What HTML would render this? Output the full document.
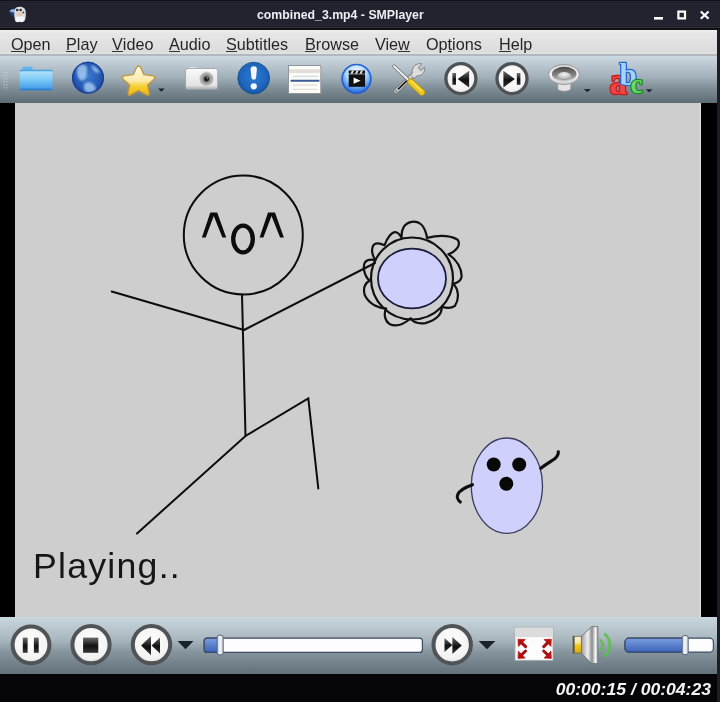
<!DOCTYPE html>
<html><head><meta charset="utf-8">
<style>
*{margin:0;padding:0;box-sizing:border-box}
html,body{width:720px;height:702px;overflow:hidden;background:#000;font-family:"Liberation Sans",sans-serif}
.abs{position:absolute}
#menu span,#title .t,#time{will-change:transform}
#title{left:0;top:0;width:720px;height:30px;background:#22232e}
#title .band{left:0;top:25px;width:720px;height:5px;background:#17181e}
#title .t{left:257px;top:6px;white-space:nowrap;color:#eceff2;font-weight:bold;font-size:12.3px;line-height:18px}
#menu{left:0;top:30px;width:717px;height:25.5px;background:linear-gradient(#eeeeee 0px,#e6e6e6 4px,#dcdcdc 22px,#e0e0e0 22px,#e0e0e0 23.5px,#b4b8bc 24px,#b4b8bc 25.5px)}
#menu span{position:absolute;top:4px;font-size:16.2px;line-height:20px;color:#262626}
#menu u{text-decoration:none;position:relative}
#menu u:after{content:"";position:absolute;left:0;right:0;bottom:1px;height:1.5px;background:#333}
#frameR{left:717px;top:30px;width:3px;height:672px;background:#1c1d26;z-index:5}
#tool{left:0;top:55.5px;width:717px;height:47.5px;background:linear-gradient(#cdd9e1,#a2b0ba 45%,#7e8c95 70%,#5e6c74)}
#video{left:15px;top:103px;width:686px;height:514px;background:#cecece}
#ctrl{left:0;top:617px;width:717px;height:57px;background:linear-gradient(#cad7df,#a8b6be 40%,#8896a0 60%,#62707a)}
#status{left:0;top:674px;width:720px;height:28px;background:#050507}
#time{left:540px;top:677px;width:171px;text-align:right;color:#f4f4f4;font-weight:bold;font-style:italic;font-size:16.5px;line-height:22px;transform:scaleX(1.065);transform-origin:100% 0}
</style></head><body>
<div id="title" class="abs">
  <div class="abs" style="left:0;top:0;width:720px;height:1px;background:#10131a"></div>
  <div class="abs" style="left:0;top:25px;width:720px;height:1px;background:#2b2c37"></div>
  <div class="abs" style="left:0;top:26px;width:720px;height:1px;background:#1a1b22"></div>
  <div class="abs" style="left:0;top:27px;width:720px;height:1px;background:#30313a"></div>
  <div class="abs" style="left:0;top:28px;width:720px;height:2px;background:#0f1013"></div>
  <div class="t abs">combined_3.mp4 - SMPlayer</div>
  <svg class="abs" style="left:0;top:0" width="720" height="30" viewBox="0 0 720 30">
    <defs><filter id="fIco" x="-30%" y="-30%" width="160%" height="160%"><feGaussianBlur stdDeviation="0.45"/></filter></defs>
    <g filter="url(#fIco)">
    <path d="M8.8,11.5 C10,8.5 13,8 15.5,8.8 L16,16.5 C13,17 10,15 8.8,11.5Z" fill="#1e3e72"/>
    <path d="M9.5,11 C11,9 13,8.8 15.5,9.5 L15.5,12.5 C13,12.5 11,12.2 9.5,11Z" fill="#9ab4d8"/>
    <path d="M15,9 C16,6.5 22,6 24.5,8.5 C26.5,11 26,17 25,20 C24,22.5 21,22.8 19.5,21.5 C18,22.8 15.5,22.5 15,20 C14,17 14,12 15,9Z" fill="#dcdee4"/>
    <path d="M16,17 C18,16 22,16 24.5,17 C24.5,19 24,21.5 21.5,22 C20.5,22 20,21.5 19.5,21.5 C18.5,22.3 16,22.3 15.5,20Z" fill="#f4f6fa"/>
    <circle cx="17.2" cy="10" r="1.3" fill="#2a2a2a"/><circle cx="20.6" cy="10" r="1.3" fill="#2a2a2a"/><circle cx="23.3" cy="12.6" r="1" fill="#444"/>
    <path d="M16,12.8 C18,11.8 21,11.8 23,13.2 L22.2,16 C20,16.6 18,16.6 16.5,16Z" fill="#e2ccb8"/>
    </g>
    <g fill="#ffffff">
      <rect x="654" y="17" width="9" height="2.6"/>
      <path d="M677.3,10.6 h8.8 v8.8 h-8.8z M679.5,12.8 v4.4 h4.4 v-4.4z" fill-rule="evenodd"/>
    </g>
    <g stroke="#ffffff" stroke-width="2.1" stroke-linecap="butt">
      <line x1="700.8" y1="11.4" x2="708.6" y2="18.8"/><line x1="708.6" y1="11.4" x2="700.8" y2="18.8"/>
    </g>
  </svg>
</div>
<div id="menu" class="abs">
  <span style="left:11px"><u>O</u>pen</span>
  <span style="left:66px"><u>P</u>lay</span>
  <span style="left:112px"><u>V</u>ideo</span>
  <span style="left:169px"><u>A</u>udio</span>
  <span style="left:226px"><u>S</u>ubtitles</span>
  <span style="left:305px"><u>B</u>rowse</span>
  <span style="left:375px">Vie<u>w</u></span>
  <span style="left:426px">Op<u>t</u>ions</span>
  <span style="left:499px"><u>H</u>elp</span>
</div>
<div id="frameR" class="abs"></div>
<div id="tool" class="abs"></div>
<svg class="abs" style="left:0;top:0" width="720" height="702" viewBox="0 0 720 702">
<defs>
<filter id="fBlur" x="-50%" y="-50%" width="200%" height="200%"><feGaussianBlur stdDeviation="0.9"/></filter>
<linearGradient id="gFold" x1="0" y1="0" x2="0" y2="1"><stop offset="0" stop-color="#b4e2fa"/><stop offset="0.45" stop-color="#7acaf6"/><stop offset="1" stop-color="#3a96e6"/></linearGradient>
<radialGradient id="gGlobe" cx="0.5" cy="0.45" r="0.6"><stop offset="0" stop-color="#3a7ad0"/><stop offset="0.7" stop-color="#2456b0"/><stop offset="1" stop-color="#173a90"/></radialGradient>
<linearGradient id="gStar" x1="0" y1="0" x2="0" y2="1"><stop offset="0" stop-color="#fffdf0"/><stop offset="0.5" stop-color="#fbeaa8"/><stop offset="0.7" stop-color="#f4d030"/><stop offset="1" stop-color="#e8b818"/></linearGradient>
<linearGradient id="gCam" x1="0" y1="0" x2="0" y2="1"><stop offset="0" stop-color="#fafafa"/><stop offset="0.8" stop-color="#e4e4e4"/><stop offset="1" stop-color="#a8a8a8"/></linearGradient>
<radialGradient id="gLens" cx="0.5" cy="0.5" r="0.5"><stop offset="0.45" stop-color="#505050"/><stop offset="0.6" stop-color="#8a8a8a"/><stop offset="1" stop-color="#b8b8b8"/></radialGradient>
<radialGradient id="gExc" cx="0.5" cy="0.45" r="0.55"><stop offset="0" stop-color="#2c7ad4"/><stop offset="0.75" stop-color="#1e66bc"/><stop offset="1" stop-color="#1552a0"/></radialGradient>
<radialGradient id="gClap" cx="0.5" cy="0.3" r="0.75"><stop offset="0" stop-color="#f8fcff"/><stop offset="0.45" stop-color="#b0d8ff"/><stop offset="0.75" stop-color="#4a8ae8"/><stop offset="1" stop-color="#1e54c0"/></radialGradient>
<radialGradient id="gBtn" cx="0.5" cy="0.4" r="0.6"><stop offset="0" stop-color="#ffffff"/><stop offset="0.8" stop-color="#f2f2f2"/><stop offset="1" stop-color="#d8d8d8"/></radialGradient>
<linearGradient id="gIco" x1="0" y1="0" x2="0" y2="1"><stop offset="0" stop-color="#707070"/><stop offset="0.55" stop-color="#101010"/><stop offset="1" stop-color="#303030"/></linearGradient>
<linearGradient id="gSpkRim" x1="0" y1="0" x2="0" y2="1"><stop offset="0" stop-color="#d8d8d8"/><stop offset="0.5" stop-color="#f4f4f4"/><stop offset="1" stop-color="#d0d0d0"/></linearGradient>
<linearGradient id="gSpkIn" x1="0" y1="0" x2="0" y2="1"><stop offset="0" stop-color="#4a4a4a"/><stop offset="0.6" stop-color="#8a8a8a"/><stop offset="1" stop-color="#c8c8c8"/></linearGradient>
<radialGradient id="gSpkC" cx="0.5" cy="0.3" r="0.7"><stop offset="0" stop-color="#f4f4f4"/><stop offset="0.7" stop-color="#c0c0c0"/><stop offset="1" stop-color="#8a8a8a"/></radialGradient>
</defs>
<!-- handle -->
<g fill="#d4dce2" opacity="0.45"><rect x="3.5" y="72" width="1.5" height="1.5"/><rect x="6" y="72" width="1.5" height="1.5"/><rect x="3.5" y="75" width="1.5" height="1.5"/><rect x="6" y="75" width="1.5" height="1.5"/><rect x="3.5" y="78" width="1.5" height="1.5"/><rect x="6" y="78" width="1.5" height="1.5"/><rect x="3.5" y="81" width="1.5" height="1.5"/><rect x="6" y="81" width="1.5" height="1.5"/><rect x="3.5" y="84" width="1.5" height="1.5"/><rect x="6" y="84" width="1.5" height="1.5"/><rect x="3.5" y="87" width="1.5" height="1.5"/><rect x="6" y="87" width="1.5" height="1.5"/></g>
<!-- folder -->
<rect x="22.5" y="66.8" width="10" height="5" rx="1.2" fill="#5cb6ec"/>
<rect x="19.8" y="69.8" width="32.6" height="2.5" rx="0.8" fill="#4aa4e0"/>
<rect x="19.6" y="71.2" width="32.9" height="19" rx="1.5" fill="url(#gFold)"/>
<rect x="19.6" y="88.6" width="32.9" height="1.6" fill="#2f80cc"/>
<!-- globe -->
<circle cx="88" cy="77.7" r="16" fill="url(#gGlobe)"/>
<g fill="#b4d6f8" opacity="0.75" filter="url(#fBlur)">
<path d="M79,66 C83,63.5 88,65 87,70 C86,74 88,77 84,80 C80,82 78,78 77,74 C76.5,70 77,67 79,66Z"/>
<path d="M85,83 C90,81 95,84 96,89 C93,93 87,93.5 84.5,90.5 C83.5,88 83.5,85 85,83Z"/>
<path d="M91,65.5 C95,66 99,69 99.5,73 C96,73.5 93,71 91,65.5Z"/>
</g>
<circle cx="88" cy="77.7" r="15.5" fill="none" stroke="#183a90" stroke-width="1"/>
<!-- star -->
<path d="M138.5,66 C139.5,66 140.5,67 141.3,68.8 L143.8,74.6 L151.8,75.6 C155.5,76.2 155.5,78 153.5,79.8 L147.6,85 L149.2,92.4 C149.8,95.2 148.3,96 145.8,94.6 L138.6,90.6 L131.4,94.6 C128.9,96 127.4,95.2 128,92.4 L129.6,85 L123.7,79.8 C121.7,78 121.7,76.2 125.4,75.6 L133.4,74.6 L135.9,68.8 C136.7,67 137.5,66 138.5,66Z" fill="url(#gStar)" stroke="#c0963a" stroke-width="1.3" stroke-linejoin="round"/>
<path d="M158,88.6 L164.8,88.6 L161.4,91.8Z" fill="#1a2530"/>
<!-- camera -->
<rect x="189" y="67.3" width="8" height="3" rx="1" fill="#e8e8e8"/>
<rect x="185.6" y="68.5" width="32.1" height="21" rx="2.2" fill="url(#gCam)" stroke="#9aa0a4" stroke-width="0.8"/>
<circle cx="206.5" cy="78.9" r="7" fill="#b0b0b0" stroke="#d8d8d8" stroke-width="0.8"/>
<circle cx="206.5" cy="78.9" r="4.4" fill="#8a8a8a"/>
<circle cx="206.5" cy="78.9" r="2.5" fill="#1e1e1e"/>
<circle cx="207.3" cy="78.1" r="0.8" fill="#999"/>
<!-- exclamation -->
<circle cx="253.7" cy="78.1" r="15.9" fill="url(#gExc)" stroke="#17508f" stroke-width="0.8"/>
<path d="M250.6,69.5 A3.15,3.15 0 0 1 256.9,69.5 L256,78 A2.3,2.3 0 0 1 251.5,78Z" fill="#f6f8fc"/>
<circle cx="253.75" cy="86.3" r="3.1" fill="#f6f8fc"/>
<!-- doc -->
<rect x="288.5" y="65.5" width="32.3" height="28" fill="#fbfbf8" stroke="#90949a" stroke-width="1"/>
<rect x="289" y="69.2" width="31.3" height="3.8" fill="#e4dedb"/>
<rect x="293" y="75.8" width="25" height="0.9" fill="#c8ccd8"/>
<rect x="290.4" y="79.7" width="29.2" height="2" rx="1" fill="#3c5a98"/>
<rect x="293" y="84.6" width="24" height="0.9" fill="#d8d4cc"/>
<rect x="293" y="88.8" width="24" height="0.9" fill="#d8d4cc"/>
<!-- clapper -->
<circle cx="356.5" cy="78.8" r="15" fill="url(#gClap)"/>
<circle cx="356.5" cy="78.8" r="14.3" fill="none" stroke="#2460d0" stroke-width="1.6"/>
<rect x="348.7" y="74.3" width="16.4" height="12.5" fill="#111"/>
<path d="M348.7,70.5 L365,70.5 L365,73.7 L348.7,73.7Z" fill="#111"/>
<g fill="#e8e8e8"><path d="M352,70.5 L354,70.5 L352.5,73.7 L350.5,73.7Z"/><path d="M356.5,70.5 L358.5,70.5 L357,73.7 L355,73.7Z"/><path d="M361,70.5 L363,70.5 L361.5,73.7 L359.5,73.7Z"/></g>
<path d="M353.6,77.6 L360.6,80.8 L353.6,83.8Z" fill="#fff"/>
<!-- tools -->
<line x1="396" y1="91.3" x2="414.5" y2="73.5" stroke="#6a6a6a" stroke-width="5.2" stroke-linecap="round"/>
<line x1="396" y1="91.3" x2="414.5" y2="73.5" stroke="#d4d4d4" stroke-width="3.8" stroke-linecap="round"/>
<line x1="398" y1="89.3" x2="408.5" y2="79.2" stroke="#1a1a1a" stroke-width="1.7"/>
<circle cx="396.3" cy="91.2" r="1.3" fill="#8a8a8a"/>
<path d="M412.3,72.8 C411.5,68.5 414.5,64 419.5,63.6 L421.8,63.8 L418.2,67.6 L420.6,70.6 L424.6,67.4 C425.4,72.4 421.6,76 417.2,75.8 L414,78.4 L410.6,75.2Z" fill="#dedede" stroke="#7a7a7a" stroke-width="0.9" stroke-linejoin="round"/>
<line x1="394" y1="66.3" x2="408.8" y2="80.3" stroke="#6a6a6a" stroke-width="3.6" stroke-linecap="round"/>
<line x1="394" y1="66.3" x2="408.8" y2="80.3" stroke="#f0f0f0" stroke-width="2.2" stroke-linecap="round"/>
<line x1="410.8" y1="82" x2="421.8" y2="92.3" stroke="#a88a18" stroke-width="7" stroke-linecap="round"/>
<line x1="410.8" y1="82" x2="421.8" y2="92.3" stroke="#ecc81c" stroke-width="5.6" stroke-linecap="round"/>
<line x1="411" y1="81" x2="421.5" y2="90.8" stroke="#f8e468" stroke-width="1.4" stroke-linecap="round"/>
<!-- prev -->
<circle cx="460.9" cy="78.6" r="15" fill="url(#gBtn)" stroke="#4e5254" stroke-width="3.3"/>
<rect x="452.4" y="73" width="3.6" height="11.8" fill="url(#gIco)"/>
<path d="M457.7,78.9 L469.1,70.7 L469.1,87.5Z" fill="url(#gIco)"/>
<!-- next -->
<circle cx="512" cy="78.6" r="15" fill="url(#gBtn)" stroke="#4e5254" stroke-width="3.3"/>
<path d="M503.4,70.7 L514.9,78.9 L503.4,87.5Z" fill="url(#gIco)"/>
<rect x="516.8" y="73" width="3.6" height="11.8" fill="url(#gIco)"/>
<!-- speaker top view -->
<path d="M557.5,82 L571,82 L570.5,89.5 C567,91.8 561.5,91.8 558,89.5Z" fill="#e4e4e4" stroke="#9a9a9a" stroke-width="0.7"/>
<ellipse cx="564" cy="74.5" rx="15.4" ry="10" fill="url(#gSpkRim)" stroke="#8e9092" stroke-width="0.9"/>
<ellipse cx="564.2" cy="74" rx="12.3" ry="7.2" fill="url(#gSpkIn)"/>
<ellipse cx="564.2" cy="76" rx="6.8" ry="3.9" fill="url(#gSpkC)"/>
<path d="M583.8,88.9 L590.8,88.9 L587.3,92.2Z" fill="#1a2530"/>
<!-- abc -->
<g font-family="Liberation Serif" font-weight="bold" stroke-linejoin="round" paint-order="stroke">
<text x="609.5" y="94" font-size="37" fill="#f04444" stroke="#c41a1a" stroke-width="2.6" transform="translate(609.5,0) scale(0.95,1) translate(-609.5,0)">a</text>
<text x="619.5" y="85" font-size="31" fill="#a4d4ff" stroke="#2c66cc" stroke-width="2.6">b</text>
<text x="630.5" y="92.5" font-size="27" fill="#6ad86a" stroke="#1c8c24" stroke-width="2.6">c</text>
</g>
<path d="M646,89.3 L652.4,89.3 L649.2,92.5Z" fill="#1a2530"/>
</svg>

<div id="video" class="abs"><div class="abs" style="left:684px;top:0;width:1.5px;height:514px;background:#d8d8d8"></div></div>
<svg class="abs" style="left:0;top:0" width="720" height="702" viewBox="0 0 720 702">
<g fill="none" stroke="#0c0c0c" stroke-width="2" stroke-linecap="round">
<circle cx="243.3" cy="235" r="59.5"/>
<line x1="242" y1="294.5" x2="245.5" y2="436"/>
<line x1="111.7" y1="291.5" x2="244" y2="330"/>
<line x1="244" y1="330" x2="375" y2="263"/>
<polyline points="137,533.5 245.5,436 308.3,398.5 318.3,488.5" stroke-linejoin="miter"/>
</g>
<g fill="#0c0c0c">
<polygon points="201.9,237.5 210.3,212.5 217.2,212.5 226.2,237.5 222.4,237.5 213.75,216 205.7,237.5"/>
<polygon points="259.6,237.5 268,212.5 275,212.5 283.9,237.5 280.1,237.5 271.5,216 263.4,237.5"/>
</g>
<ellipse cx="243" cy="239" rx="9.8" ry="13.4" fill="none" stroke="#0c0c0c" stroke-width="4.3"/>
<g transform="translate(355,215) scale(0.16383)">
<path vector-effect="non-scaling-stroke" fill="none" stroke="#111" stroke-width="2.2" stroke-linejoin="round"
 d="M125,275 C95,235 100,185 125,175 C150,170 170,180 180,185
 C195,140 225,100 250,105 C270,110 280,130 285,140
 C280,90 300,50 345,42 C395,35 425,60 440,140
 C500,125 570,120 625,150 C650,180 620,220 570,240
 C620,270 655,330 650,380 C645,405 620,415 600,420
 C630,450 640,510 610,555 C590,570 560,570 530,560
 C530,600 500,640 430,660 C380,665 350,650 340,630
 C300,665 250,685 210,665 C180,645 175,600 190,570
 C150,570 90,550 60,490 C45,440 65,415 90,400
 C60,380 45,320 60,290 C75,270 100,270 125,275 Z"/>
</g>
<circle cx="412" cy="278.5" r="41" fill="none" stroke="#111" stroke-width="2.2"/>
<ellipse cx="412" cy="278.5" rx="34" ry="29.9" fill="#d0d0fd" stroke="#1a1a3a" stroke-width="1.8"/>
<ellipse cx="506.9" cy="485.7" rx="35.6" ry="47.7" fill="#d0d0fd" stroke="#3b3b5c" stroke-width="1.3"/>
<g fill="#080808"><circle cx="493.7" cy="464.5" r="7"/><circle cx="519.2" cy="464.5" r="7"/><circle cx="506.3" cy="483.8" r="7"/></g>
<g fill="none" stroke="#0c0c0c" stroke-width="3.1" stroke-linecap="round" stroke-linejoin="round">
<path d="M472.5,484.7 C466,487 460,490 458,494 C456,498 458,500 460.3,502"/>
<path d="M540.8,468.3 C546,464 550,462 554.5,459 C558,456 558.5,454 558.3,451.7"/>
</g>
<text x="33" y="578.5" font-family="Liberation Sans" font-size="35" fill="#161616" letter-spacing="1.2" transform="translate(33,0) scale(1.02,1) translate(-33,0)">Playing..</text>
</svg>

<div id="ctrl" class="abs"></div>
<svg class="abs" style="left:0;top:0" width="720" height="702" viewBox="0 0 720 702">
<defs>
<filter id="fBlur2" x="-50%" y="-50%" width="200%" height="200%"><feGaussianBlur stdDeviation="0.6"/></filter>
<radialGradient id="gBtn2" cx="0.5" cy="0.4" r="0.6"><stop offset="0" stop-color="#ffffff"/><stop offset="0.8" stop-color="#f2f2f2"/><stop offset="1" stop-color="#d8d8d8"/></radialGradient>
<linearGradient id="gIco2" x1="0" y1="0" x2="0" y2="1"><stop offset="0" stop-color="#6a6a6a"/><stop offset="0.55" stop-color="#101010"/><stop offset="1" stop-color="#383838"/></linearGradient>
<linearGradient id="gSldB" x1="0" y1="0" x2="0" y2="1"><stop offset="0" stop-color="#7a9ee0"/><stop offset="1" stop-color="#3a62b8"/></linearGradient>
<linearGradient id="gHnd" x1="0" y1="0" x2="1" y2="0"><stop offset="0" stop-color="#c8d0e0"/><stop offset="0.5" stop-color="#f4f6fa"/><stop offset="1" stop-color="#c0c8d8"/></linearGradient>
<linearGradient id="gCone" x1="0" y1="0" x2="1" y2="0"><stop offset="0" stop-color="#a0a0a0"/><stop offset="0.4" stop-color="#f0f0f0"/><stop offset="0.65" stop-color="#8a8a8a"/><stop offset="0.85" stop-color="#f8f8f8"/><stop offset="1" stop-color="#b0b0b0"/></linearGradient>
<linearGradient id="gYel" x1="0" y1="0" x2="0" y2="1"><stop offset="0" stop-color="#f4f0e0"/><stop offset="0.35" stop-color="#f6e8a0"/><stop offset="0.55" stop-color="#f0c818"/><stop offset="1" stop-color="#d8a810"/></linearGradient>
</defs>
<!-- pause -->
<circle cx="31" cy="644.9" r="18.4" fill="url(#gBtn2)" stroke="#505456" stroke-width="4"/>
<rect x="22.8" y="637.6" width="4.8" height="15.2" fill="url(#gIco2)"/>
<rect x="33.9" y="637.6" width="4.8" height="15.2" fill="url(#gIco2)"/>
<!-- stop -->
<circle cx="91" cy="644.7" r="18.6" fill="url(#gBtn2)" stroke="#505456" stroke-width="4"/>
<rect x="83.1" y="637.6" width="15.2" height="15.2" fill="url(#gIco2)"/>
<!-- rewind -->
<circle cx="151.5" cy="644.6" r="18.7" fill="url(#gBtn2)" stroke="#505456" stroke-width="4"/>
<path d="M141.1,645.6 L151,636 L151,655.2Z" fill="url(#gIco2)"/>
<path d="M151.6,645.6 L160,637.5 L160,653.5Z" fill="url(#gIco2)"/>
<path d="M177.5,641 L193.5,641 L185.5,649.2Z" fill="#1a2228"/>
<!-- seek slider -->
<rect x="204.2" y="638.2" width="218.2" height="14.2" rx="3" fill="#fdfdff" stroke="#3c4a66" stroke-width="1.2"/>
<path d="M207.2,638.2 L219,638.2 L219,652.4 L207.2,652.4 A3,3 0 0 1 204.2,649.4 L204.2,641.2 A3,3 0 0 1 207.2,638.2Z" fill="url(#gSldB)" stroke="#3c4a66" stroke-width="1.2"/>
<rect x="217.2" y="635.2" width="6" height="19.6" rx="2" fill="url(#gHnd)" stroke="#5a6478" stroke-width="1"/>
<!-- ff -->
<circle cx="452.2" cy="644.7" r="18.7" fill="url(#gBtn2)" stroke="#505456" stroke-width="4"/>
<path d="M444.5,638 L452.4,645 L444.5,652Z" fill="url(#gIco2)"/>
<path d="M452.4,637 L461.8,645.5 L452.4,654Z" fill="url(#gIco2)"/>
<path d="M478.6,641 L495.3,641 L487,649.2Z" fill="#1a2228"/>
<!-- fullscreen -->
<rect x="515" y="627.3" width="38" height="33" fill="#fdfdfd" stroke="#a4aab0" stroke-width="0.8"/>
<rect x="515.4" y="627.7" width="37.2" height="9.5" fill="#dcdcdc"/>
<g fill="#bc1414" stroke="#bc1414" stroke-linejoin="round">
<path d="M518,639.2 L525.2,639.6 L518.4,646.4Z" stroke-width="0.8"/>
<path d="M551.3,639.2 L544.1,639.6 L550.9,646.4Z" stroke-width="0.8"/>
<path d="M518,658.4 L525.2,658 L518.4,651.2Z" stroke-width="0.8"/>
<path d="M551.3,658.4 L544.1,658 L550.9,651.2Z" stroke-width="0.8"/>
</g>
<g stroke="#a81010" stroke-width="3" stroke-linecap="round">
<line x1="521" y1="642.2" x2="525.6" y2="646.6"/>
<line x1="548.3" y1="642.2" x2="543.7" y2="646.6"/>
<line x1="521" y1="655.4" x2="525.6" y2="651"/>
<line x1="548.3" y1="655.4" x2="543.7" y2="651"/>
</g>
<!-- volume speaker -->
<rect x="573" y="636.3" width="8.6" height="16.8" fill="url(#gYel)" stroke="#6a6a50" stroke-width="0.8"/>
<rect x="573" y="636.3" width="1.6" height="16.8" fill="#505048"/>
<path d="M581.4,636.3 L591.7,626.6 L597.8,626.6 L597.8,663.6 L591.7,663.6 L581.4,653.1Z" fill="url(#gCone)" stroke="#6a6e70" stroke-width="0.8"/>
<g fill="none" stroke="#5cc04c" stroke-linecap="round" filter="url(#fBlur2)" opacity="0.85">
<path d="M600.5,640.2 C603.8,643 603.8,647.2 600.5,650.2" stroke-width="2.8"/>
<path d="M605.2,634.6 C611.5,640 611.5,650 605.2,655.6" stroke-width="3"/>
</g>
<!-- volume slider -->
<rect x="625" y="638.2" width="88.4" height="14" rx="4" fill="#fdfdff" stroke="#3c4a66" stroke-width="1.2"/>
<path d="M629,638.2 L684,638.2 L684,652.2 L629,652.2 A4,4 0 0 1 625,648.2 L625,642.2 A4,4 0 0 1 629,638.2Z" fill="url(#gSldB)" stroke="#3c4a66" stroke-width="1.2"/>
<rect x="682.2" y="635.6" width="6" height="19" rx="2" fill="url(#gHnd)" stroke="#5a6478" stroke-width="1"/>
</svg>

<div id="status" class="abs"><div id="time" class="abs" style="top:4px">00:00:15 / 00:04:23</div></div>
</body></html>
